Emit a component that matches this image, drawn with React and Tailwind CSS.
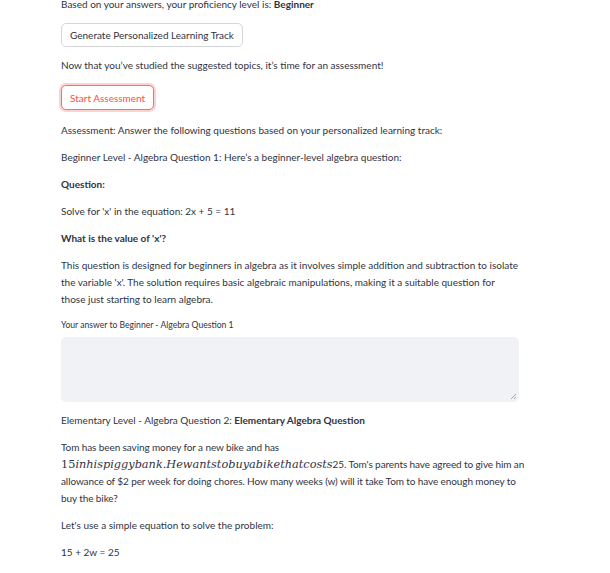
import React from "react";

const P = ({ children, className = "" }) => (
  <p className={"m-0 text-[10px] leading-[17px] text-[#31333f] " + className}>{children}</p>
);

export default function App() {
  return (
    <div
      className="w-[610px] h-[573px] overflow-hidden bg-white"
      style={{ fontFamily: "Lato, 'Noto Sans', sans-serif" }}
    >
      <div className="pl-[61px] w-[519px] -mt-[4px] flex flex-col gap-[10px]">
        <P>
          Based on your answers, your proficiency level is: <b className="font-bold">Beginner</b>
        </P>
        <div className="flex">
          <button className="h-[24px] px-[8px] rounded-[5px] border border-[#d5d6d9] bg-white text-[10px] leading-none text-[#31333f]">
            Generate Personalized Learning Track
          </button>
        </div>
        <P>Now that you’ve studied the suggested topics, it’s time for an assessment!</P>
        <div className="flex mt-[1px]">
          <button className="h-[25px] px-[8px] rounded-[5px] border border-[#ff6b6b] bg-white text-[10px] leading-none text-[#ff4b4b] shadow-[0_0_0_2px_rgba(255,75,75,0.25)]">
            Start Assessment
          </button>
        </div>
        <P className="mt-[2px]">Assessment: Answer the following questions based on your personalized learning track:</P>
        <P>Beginner Level - Algebra Question 1: Here’s a beginner-level algebra question:</P>
        <P className="font-bold">Question:</P>
        <P>Solve for 'x' in the equation: 2x + 5 = 11</P>
        <P className="font-bold">What is the value of 'x'?</P>
        <P>
          This question is designed for beginners in algebra as it involves simple addition and subtraction to isolate the variable 'x'. The solution requires basic algebraic manipulations, making it a suitable question for those just starting to learn algebra.
        </P>
        <div className="flex flex-col gap-[5px]">
          <label className="text-[8.6px] leading-[14px] text-[#31333f]">Your answer to Beginner - Algebra Question 1</label>
          <div className="relative h-[65px] w-[458px] rounded-[5px] bg-[#f0f2f6]">
            <svg className="absolute right-[2px] bottom-[2px]" width="7" height="7" viewBox="0 0 7 7">
              <path d="M6 1 L1 6 M6 4 L4 6" stroke="#9a9ca3" strokeWidth="0.9" />
            </svg>
          </div>
        </div>
        <P>
          Elementary Level - Algebra Question 2: <b className="font-bold">Elementary Algebra Question</b>
        </P>
        <P className="w-[471px] tracking-[-0.1px]">
          Tom has been saving money for a new bike and has{" "}
          <span
            className="text-[11.3px] leading-[17px] italic tracking-normal"
            style={{ fontFamily: "'DejaVu Serif', 'Liberation Serif', serif" }}
          >
            <span className="not-italic">15</span>inhispiggybank.Hewantstobuyabikethatcosts
          </span>
          25. Tom's parents have agreed to give him an allowance of $2 per week for doing chores. How many weeks (w) will it take Tom to have enough money to buy the bike?
        </P>
        <P>Let's use a simple equation to solve the problem:</P>
        <P>15 + 2w = 25</P>
      </div>
    </div>
  );
}
